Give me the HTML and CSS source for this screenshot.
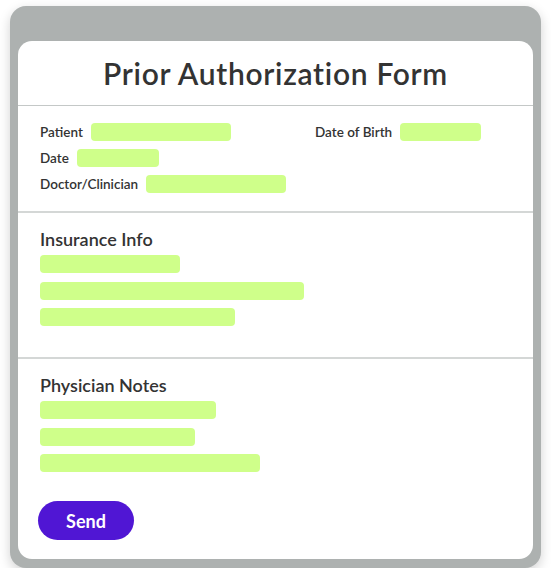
FILE: index.html
```html
<!DOCTYPE html>
<html lang="en">
<head>
    <meta charset="UTF-8">
    <meta name="viewport" content="width=device-width, initial-scale=1.0">
    <title>Prior Authorization Form</title>
    <link rel="stylesheet" href="styles.css">
</head>
<body>
    <div class="frame">
        <div class="card">
            <h1 class="title">Prior Authorization Form</h1>

            <div class="section patient-info">
                <div class="row">
                    <div class="field">
                        <span class="label">Patient</span>
                        <span class="bar" style="width: 140px"></span>
                    </div>
                    <div class="field">
                        <span class="label">Date of Birth</span>
                        <span class="bar" style="width: 81px"></span>
                    </div>
                </div>
                <div class="field">
                    <span class="label">Date</span>
                    <span class="bar" style="width: 82px"></span>
                </div>
                <div class="field">
                    <span class="label">Doctor/Clinician</span>
                    <span class="bar" style="width: 140px"></span>
                </div>
            </div>

            <div class="section">
                <h2 class="heading">Insurance Info</h2>
                <div class="bars">
                    <span class="bar" style="width: 140px"></span>
                    <span class="bar" style="width: 264px"></span>
                    <span class="bar" style="width: 195px"></span>
                </div>
            </div>

            <div class="section last">
                <h2 class="heading">Physician Notes</h2>
                <div class="bars">
                    <span class="bar" style="width: 176px"></span>
                    <span class="bar" style="width: 155px"></span>
                    <span class="bar" style="width: 220px"></span>
                </div>
                <button class="send">Send</button>
            </div>
        </div>
    </div>
</body>
</html>
```

FILE: styles.css
```css
body {
    margin: 0;
    background-color: #fff;
    font-family: Lato, "Noto Sans", sans-serif;
    color: #333;
}

.frame {
    margin: 6px 10px 0;
    height: 562px;
    box-sizing: border-box;
    padding: 35px 8px 9px;
    background-color: #adb1b0;
    border-radius: 16px;
    box-shadow: 0 4px 12px rgba(0, 0, 0, 0.18);
}

.card {
    height: 100%;
    background-color: #fff;
    border-radius: 14px;
    display: flex;
    flex-direction: column;
}

.title {
    margin: 0;
    height: 65px;
    box-sizing: border-box;
    border-bottom: 1px solid #c4c8c7;
    display: flex;
    align-items: center;
    justify-content: center;
    font-size: 30px;
    font-weight: 600;
    color: #333;
    letter-spacing: 0.7px;
}

.section {
    padding: 0 22px;
    border-bottom: 2px solid #d4d7d6;
    box-sizing: border-box;
}

.patient-info {
    padding-top: 17px;
    height: 107px;
    display: flex;
    flex-direction: column;
    gap: 8px;
}

.row {
    display: grid;
    grid-template-columns: 275px auto;
}

.field {
    display: flex;
    align-items: center;
    gap: 8px;
}

.label {
    font-size: 13.5px;
    font-weight: 600;
    color: #333;
}

.bar {
    display: block;
    height: 18px;
    background-color: #cfff8a;
    border-radius: 4px;
}

.heading {
    margin: 0;
    padding-top: 15px;
    height: 42px;
    box-sizing: border-box;
    font-size: 18px;
    font-weight: 600;
    color: #333;
}

.bars {
    display: flex;
    flex-direction: column;
    gap: 8.5px;
}

.section:not(.patient-info) {
    height: 146px;
}

.section.last {
    height: auto;
    border-bottom: none;
}

.section.last .bars {
    margin-bottom: 29px;
}

.send {
    margin-left: -2px;
    width: 96px;
    height: 39px;
    border: none;
    border-radius: 20px;
    background-color: #5016d4;
    color: #fff;
    font-family: Lato, "Noto Sans", sans-serif;
    font-size: 18px;
    font-weight: 700;
}
```
